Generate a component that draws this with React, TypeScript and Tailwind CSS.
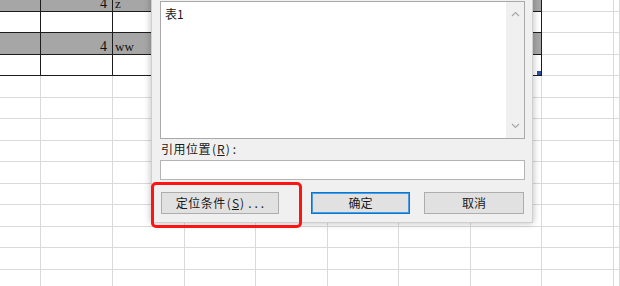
const ROWS = 14;
const COLS = 10;

// table cells (row, col) -> text
const cellText: Record<string, { text: string; right?: boolean }> = {
  "0-1": { text: "4", right: true },
  "0-2": { text: "z" },
  "2-1": { text: "4", right: true },
  "2-2": { text: "ww" },
};

function Cell({ r, c }: { r: number; c: number }) {
  const inTable = r < 4 && c < 8;
  const shaded = inTable && r % 2 === 0;
  const t = cellText[`${r}-${c}`];
  return (
    <div
      className={
        "relative flex items-end overflow-hidden border-r border-b leading-[14px] text-[#111] " +
        (inTable ? "border-[#1c1c1c] " : "border-[#dadada] ") +
        (shaded ? "bg-[#a6a6a6] " : "bg-white ") +
        (t?.right ? "justify-end pr-[5px] text-[14px]" : "justify-start pl-[2px] text-[13px]")
      }
      style={{ fontFamily: '"Liberation Serif", serif' }}
    >
      {t && <span>{t.text}</span>}
      {r === 3 && c === 7 && (
        <div className="absolute -right-px -bottom-px h-[6px] w-[6px] border-t border-l border-white bg-[#2d4ea6]" />
      )}
    </div>
  );
}

function Chevron({ up }: { up?: boolean }) {
  return (
    <svg width="9" height="6" viewBox="0 0 9 6">
      <polyline
        points={up ? "1,5 4.5,1.5 8,5" : "1,1 4.5,4.5 8,1"}
        fill="none"
        stroke="#a8a8a8"
        strokeWidth="1.2"
      />
    </svg>
  );
}

export default function App() {
  return (
    <div className="relative h-[286px] w-[620px] overflow-hidden bg-white">
      {/* spreadsheet grid */}
      <div className="grid grid-cols-[41px_72px_72px_71px_72px_71px_72px_71px_72px_1fr] grid-rows-[12px_21px_22px_21px_22px_21px_22px_21px_22px_21px_22px_21px_22px_21px]">
        {Array.from({ length: ROWS }).map((_, r) =>
          Array.from({ length: COLS }).map((_, c) => <Cell key={`${r}-${c}`} r={r} c={c} />)
        )}
      </div>

      {/* dialog window */}
      <div
        className="absolute left-[151px] top-[-12px] flex w-[382px] flex-col border border-[#cfcfcf] bg-[#f0f0f0] px-[8px] pt-[12px] pb-[8px] text-[12px] text-[#1a1a1a] shadow-[0_0_7px_rgba(0,0,0,0.28)]"
        style={{ fontFamily: '"Noto Sans CJK SC", "Noto Sans", sans-serif' }}
      >
        {/* list box */}
        <div className="flex h-[138px] w-[365px] border border-[#a9a9a9] bg-white">
          <div className="flex-1 pt-[4px] pl-[4px] leading-[16px]">表1</div>
          <div className="flex w-[18px] flex-col items-center justify-between bg-[#f0f0f0] pt-[9px] pb-[9px]">
            <Chevron up />
            <Chevron />
          </div>
        </div>

        <div className="mt-[2px] flex h-[16px] pl-px leading-[16px]">
          <span className="tracking-[0.5px]">引用位置</span>
          <span className="mx-px">(</span>
          <span className="underline">R</span>
          <span className="mx-px">)</span>
          <span className="ml-[2px]">:</span>
        </div>

        <div className="mt-[3px] h-[20px] w-[365px] border border-[#b4b4b4] bg-white" />

        <div className="mt-[12px] flex h-[22px]">
          <div className="ml-px flex w-[118px] items-center justify-center border border-[#adadad] bg-[#e1e1e1] pl-[3px]">
            <span className="tracking-[0.5px]">定位条件</span>
            <span className="mx-px">(</span>
            <span className="underline">S</span>
            <span className="mx-px">)</span>
            <span className="ml-[3px] tracking-[3px]">...</span>
          </div>
          <div className="ml-[32px] flex w-[99px] items-center justify-center border border-[#0078d7] bg-[#e1e1e1] shadow-[inset_0_0_0_1px_#4a9be0]">
            确定
          </div>
          <div className="ml-[14px] flex w-[100px] items-center justify-center border border-[#adadad] bg-[#e1e1e1]">
            取消
          </div>
        </div>
      </div>

      {/* red highlight */}
      <div className="absolute left-[151px] top-[182px] h-[46px] w-[151px] rounded-[5px] border-[3px] border-[#ff1414]" />
    </div>
  );
}
